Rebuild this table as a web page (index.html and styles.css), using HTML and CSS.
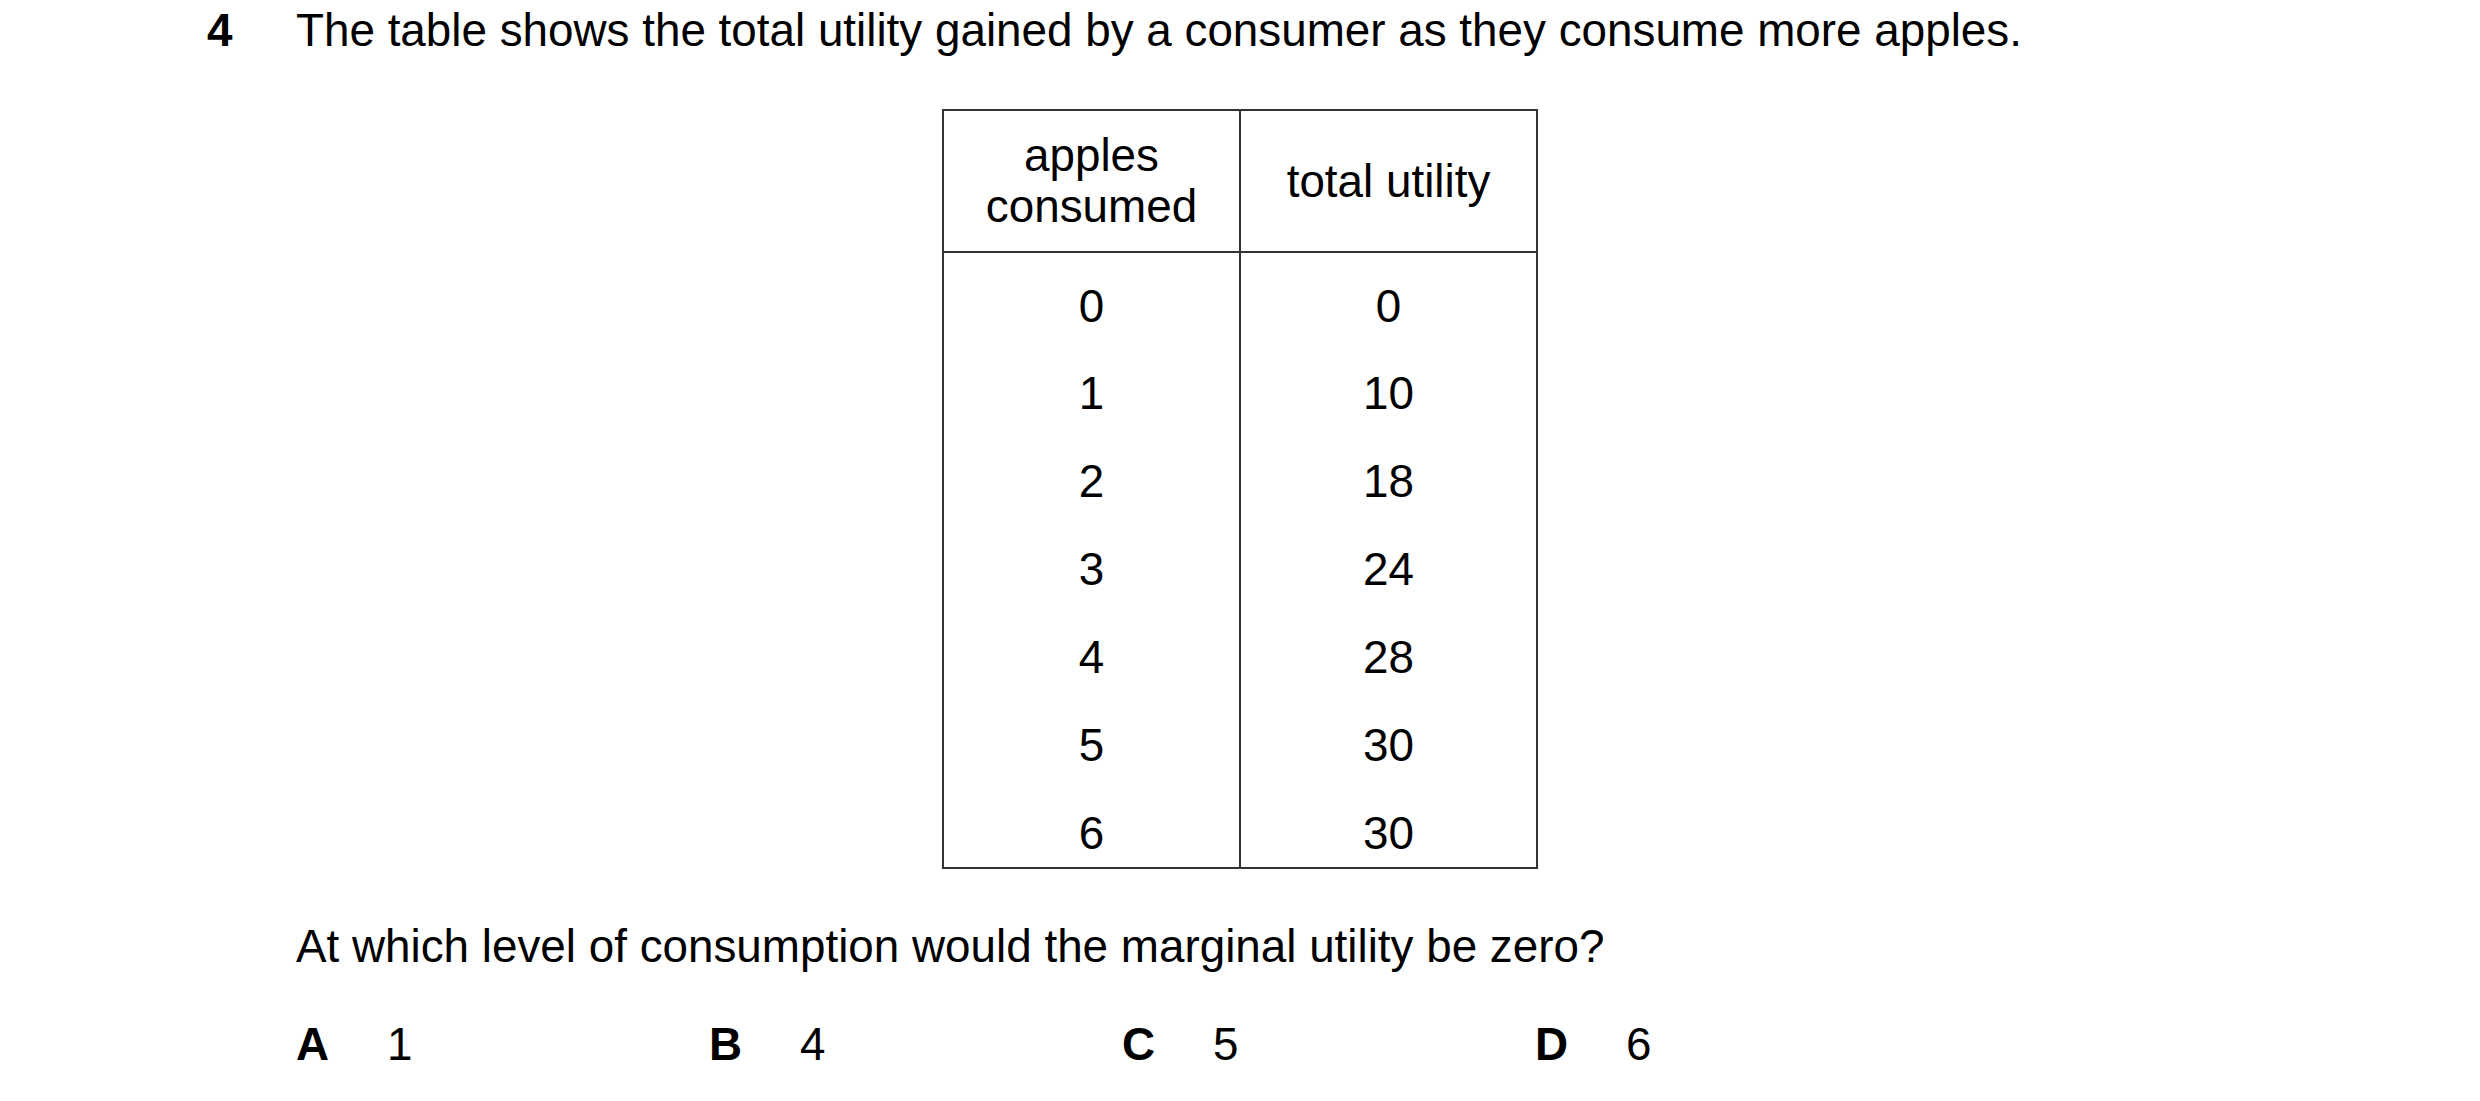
FILE: index.html
```html
<!DOCTYPE html>
<html>
<head>
<meta charset="utf-8">
<link rel="stylesheet" href="styles.css">
</head>
<body>
<div class="question">
  <div class="qnum">4</div>
  <div class="qbody">
    <p class="stem">The table shows the total utility gained by a consumer as they consume more apples.</p>
  </div>
</div>
<div class="table-wrap">
  <table class="data">
    <thead>
      <tr><th>apples<br>consumed</th><th>total utility</th></tr>
    </thead>
    <tbody>
      <tr><td>0</td><td>0</td></tr>
      <tr><td>1</td><td>10</td></tr>
      <tr><td>2</td><td>18</td></tr>
      <tr><td>3</td><td>24</td></tr>
      <tr><td>4</td><td>28</td></tr>
      <tr><td>5</td><td>30</td></tr>
      <tr><td>6</td><td>30</td></tr>
    </tbody>
  </table>
</div>
<p class="ask">At which level of consumption would the marginal utility be zero?</p>
<div class="options">
  <div class="opt"><span class="lab">A</span><span class="val">1</span></div>
  <div class="opt"><span class="lab">B</span><span class="val">4</span></div>
  <div class="opt"><span class="lab">C</span><span class="val">5</span></div>
  <div class="opt"><span class="lab">D</span><span class="val">6</span></div>
</div>
</body>
</html>
```
FILE: styles.css
```css
html, body {
  margin: 0;
  padding: 0;
  background: #fff;
}
body {
  font-family: "Liberation Sans", Arial, sans-serif;
  font-size: 45.8px;
  color: #000;
  width: 2480px;
  height: 1101px;
  overflow: hidden;
}
.question {
  display: flex;
  padding-left: 207px;
  padding-top: 6px;
  line-height: 50px;
}
.qnum {
  width: 89px;
  font-weight: bold;
}
.stem {
  margin: 0;
}
.table-wrap {
  display: flex;
  justify-content: center;
  margin-top: 53px;
}
.data {
  border-collapse: collapse;
  border: 2px solid #333;
}
.data th {
  font-weight: normal;
  width: 295px;
  height: 140px;
  line-height: 51px;
  border: 2px solid #333;
  padding: 0;
  text-align: center;
  vertical-align: middle;
}
.data td {
  border-left: 2px solid #333;
  border-right: 2px solid #333;
  text-align: center;
  height: 88px;
  padding: 29px 0 0 0;
  box-sizing: border-box;
  vertical-align: top;
  line-height: 50px;
}
.ask {
  margin: 53px 0 0 296px;
  line-height: 50px;
}
.options {
  display: grid;
  grid-template-columns: repeat(4, 413px);
  margin: 48px 0 0 296px;
  line-height: 50px;
}
.opt {
  display: flex;
}
.lab {
  width: 91px;
  font-weight: bold;
}
```
